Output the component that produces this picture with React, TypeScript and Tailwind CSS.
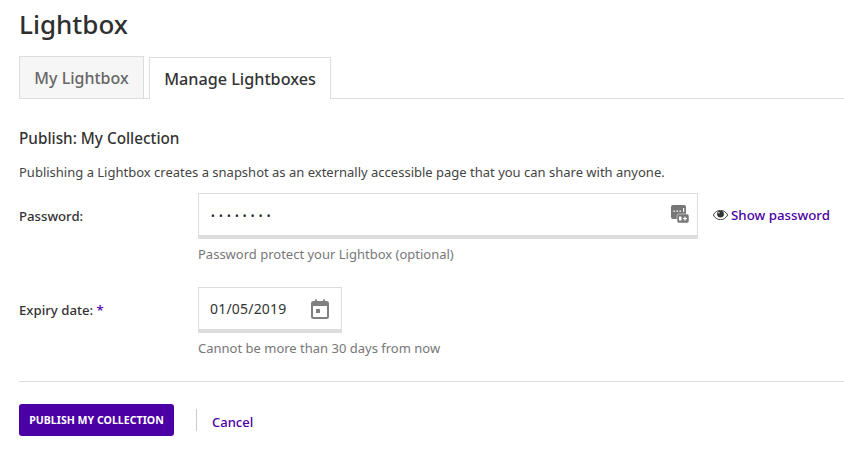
import React from "react";

const F = { fontFamily: '"Noto Sans", "Open Sans", sans-serif' };

function Field({ label, star, children, hint, right }: { label: string; star?: boolean; children: React.ReactNode; hint: string; right?: React.ReactNode }) {
  return (
    <div className="flex">
      <div className="w-[179px] shrink-0 pt-[14px] text-[13.2px] leading-[18px] font-medium text-[#333]">
        {label}
        {star && <span className="text-[#4b00a5]"> *</span>}
      </div>
      <div>
        <div className="flex items-center">
          {children}
          {right}
        </div>
        <div className="mt-[6px] text-[13px] leading-[18px] text-[#777]">{hint}</div>
      </div>
    </div>
  );
}

export default function App() {
  return (
    <div className="w-[844px] h-[458px] bg-white overflow-hidden pl-[19px] text-[#333]" style={F}>
      <h1 className="pt-[6px] text-[26px] leading-[36px] font-medium text-[#2f2f2f]">Lightbox</h1>
      <div className="mt-[15px] flex h-[42px] items-end gap-[5px] border-b border-[#ddd]">
        <div className="flex h-[42px] w-[125px] items-center justify-center border border-[#ddd] border-b-0 bg-[#f6f6f6] pt-[1px] text-[16px] font-medium text-[#666]">
          My Lightbox
        </div>
        <div className="-mb-px flex h-[42px] w-[182px] items-center justify-center border border-[#ddd] border-b-0 bg-white pt-[1px] text-[16.200px] font-medium text-[#333]">
          Manage Lightboxes
        </div>
      </div>
      <h2 className="mt-[29px] text-[15.300px] leading-[20px] font-medium text-[#333]">Publish: My Collection</h2>
      <p className="mt-[15px] text-[13px] leading-[18px] text-[#444]">
        Publishing a Lightbox creates a snapshot as an externally accessible page that you can share with anyone.
      </p>
      <div className="mt-[12px]">
        <Field
          label="Password:"
          hint="Password protect your Lightbox (optional)"
          right={
            <div className="ml-[15px] flex items-center gap-[3px] text-[13.300px] font-medium text-[#4b00a5]">
              <svg className="mb-[3px]" width="15" height="10" viewBox="0 0 24 16">
                <path d="M.5 8C3 3.500 7 .5 12 .5S21 3.500 23.500 8C21 12.500 17 15.500 12 15.500S3 12.500 .5 8z" fill="#fff" stroke="#333" strokeWidth="1.500" />
                <circle cx="12" cy="6.500" r="5.500" fill="#333" />
                <circle cx="9.500" cy="4.500" r="1.200" fill="#fff" />
              </svg>
              Show password
            </div>
          }
        >
          <div className="flex h-[46px] w-[500px] items-center justify-between border border-b-[4px] border-[#ddd] pl-[12px] pr-[8px]">
            <span className="mt-[2px] text-[10px] tracking-[4.200px] text-[#222] leading-none">••••••••</span>
            <svg width="18" height="19" viewBox="0 0 18 19">
              <rect x="0" y="0" width="15" height="14" rx="2" fill="#777" />
              <rect x="6" y="9" width="12" height="9" rx="2" fill="#777" stroke="#fff" strokeWidth="0.500" />
              <g fill="#fff">
                <rect x="2.500" y="5.500" width="1.400" height="1.400" />
                <rect x="5.500" y="5.500" width="1.400" height="1.400" />
                <rect x="8.500" y="5.500" width="1.400" height="1.400" />
                <rect x="12" y="3" width="1.200" height="4" />
                <rect x="8" y="11.500" width="2.500" height="4" />
                <rect x="12" y="13" width="4" height="1.200" />
                <rect x="13.400" y="11.600" width="1.200" height="4" />
              </g>
            </svg>
          </div>
        </Field>
      </div>
      <div className="mt-[24px]">
        <Field label="Expiry date:" star hint="Cannot be more than 30 days from now">
          <div className="flex h-[46px] w-[144px] items-center justify-between border border-b-[4px] border-[#ddd] pl-[11px] pr-[12px]">
            <span className="text-[14px] tracking-[0.200px] text-[#333]">01/05/2019</span>
            <svg width="18" height="20" viewBox="0 0 18 20">
              <rect x="1" y="3" width="16" height="16" rx="1.500" fill="none" stroke="#808080" strokeWidth="2" />
              <rect x="1" y="3" width="16" height="4" fill="#808080" />
              <rect x="4" y="0.500" width="2" height="4" fill="#808080" />
              <rect x="12" y="0.500" width="2" height="4" fill="#808080" />
              <rect x="5" y="10" width="4" height="4" fill="#808080" />
            </svg>
          </div>
        </Field>
      </div>
      <div className="mt-[24px] border-t border-[#ddd]" />
      <div className="mt-[22px] flex items-center">
        <div className="flex h-[32px] w-[155px] items-center justify-center rounded-[3px] bg-[#4b00a5] pt-[1px] text-[10.600px] font-bold text-white">
          PUBLISH MY COLLECTION
        </div>
        <div className="ml-[22px] h-[22px] border-l border-[#ccc]" />
        <div className="ml-[15px] mt-[5px] text-[13px] font-medium text-[#4b00a5]">Cancel</div>
      </div>
    </div>
  );
}
